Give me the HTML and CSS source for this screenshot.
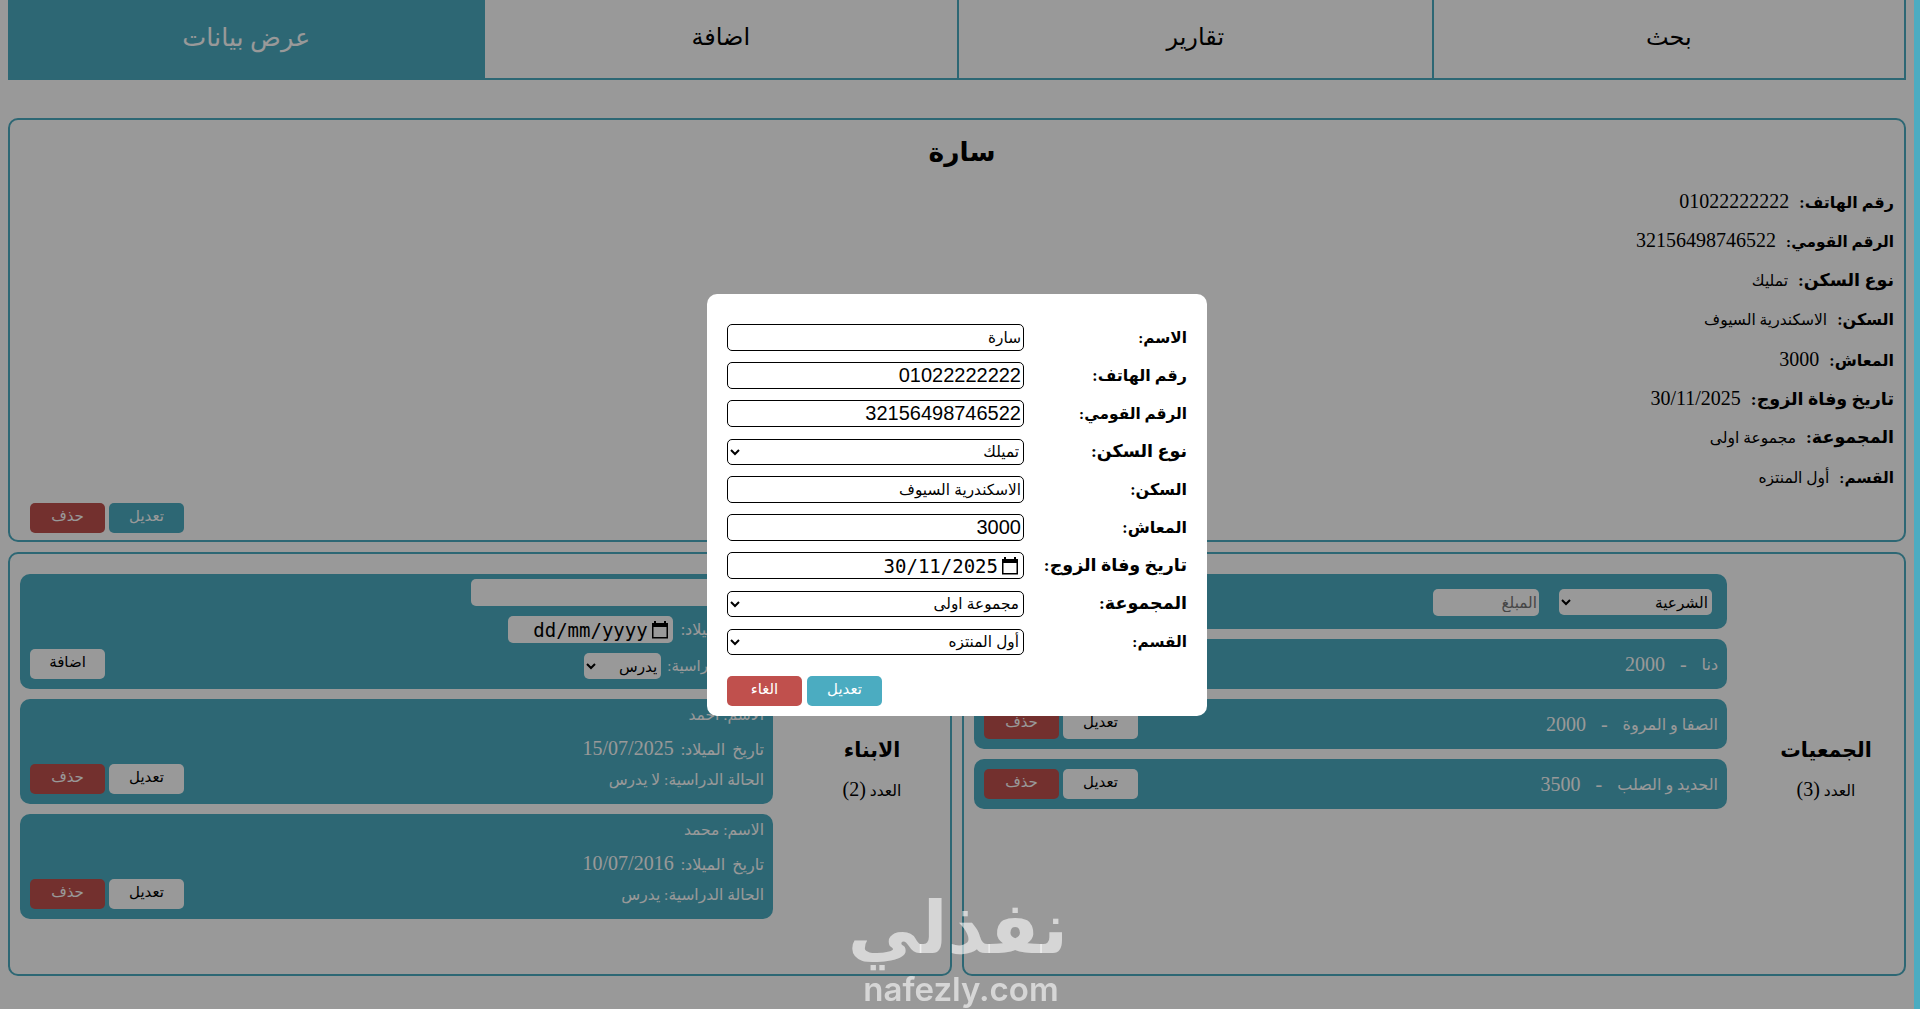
FILE: index.html
```html
<!DOCTYPE html>
<html lang="ar" dir="rtl">
  <head>
    <title>عرض بيانات</title>
    <meta charset="UTF-8" />
    <meta name="viewport" content="width=device-width, initial-scale=1.0" />
    <link rel="stylesheet" href="styles.css">
  </head>

  <body>
    <main class="page">
      <nav class="tabs">
        <a class="tab">بحث</a>
        <a class="tab">تقارير</a>
        <a class="tab">اضافة</a>
        <a class="tab active">عرض بيانات</a>
      </nav>

      <section class="card person">
        <h1>سارة</h1>
        <div class="info"><b class="small">رقم الهاتف:</b><span class="num">01022222222</span></div>
        <div class="info"><b class="smaller">الرقم القومي:</b><span class="num">32156498746522</span></div>
        <div class="info"><b>نوع السكن:</b><span>تمليك</span></div>
        <div class="info"><b class="small">السكن:</b><span>الاسكندرية السيوف</span></div>
        <div class="info"><b class="small">المعاش:</b><span class="num">3000</span></div>
        <div class="info"><b>تاريخ وفاة الزوج:</b><span class="num">30/11/2025</span></div>
        <div class="info"><b>المجموعة:</b><span>مجموعة اولى</span></div>
        <div class="info"><b class="smaller">القسم:</b><span>أول المنتزه</span></div>
        <div class="actions">
          <button class="btn btn-main">تعديل</button>
          <button class="btn btn-delete">حذف</button>
        </div>
      </section>

      <div class="panels">
        <section class="card panel">
          <div class="panel-title">
            <h2>الجمعيات</h2>
            <p>العدد <span class="num">(3)</span></p>
          </div>
          <div class="list">
            <form class="item charity-form">
              <select class="field">
                <option>الشرعية</option>
              </select>
              <input class="field" type="text" placeholder="المبلغ" />
            </form>
            <div class="item charity">
              <span>دنا</span><span class="num">-</span><span class="num">2000</span>
              <div class="actions">
                <button class="btn">تعديل</button>
                <button class="btn btn-delete">حذف</button>
              </div>
            </div>
            <div class="item charity">
              <span>الصفا و المروة</span><span class="num">-</span><span class="num">2000</span>
              <div class="actions">
                <button class="btn">تعديل</button>
                <button class="btn btn-delete">حذف</button>
              </div>
            </div>
            <div class="item charity">
              <span>الحديد و الصلب</span><span class="num">-</span><span class="num">3500</span>
              <div class="actions">
                <button class="btn">تعديل</button>
                <button class="btn btn-delete">حذف</button>
              </div>
            </div>
          </div>
        </section>

        <section class="card panel">
          <div class="panel-title">
            <h2>الابناء</h2>
            <p>العدد <span class="num">(2)</span></p>
          </div>
          <div class="list">
            <form class="item child-form">
              <div class="child-fields">
                <label>الاسم: <input class="field child-name" type="text" /></label>
                <label class="birth">تاريخ الميلاد:
                  <span class="field date-field child-date">
                    <svg class="calendar" viewBox="0 0 16 18"><path d="M2 0h2v2h8V0h2v2h2v15.500H0V2h2zM1.500 6v10h13V6z" fill-rule="evenodd" /></svg>
                    <span dir="ltr">dd/mm/yyyy</span>
                  </span>
                </label>
                <label class="study">الحالة الدراسية:
                  <select class="field child-study">
                    <option>يدرس</option>
                  </select>
                </label>
              </div>
              <button class="btn" type="button">اضافة</button>
            </form>
            <div class="item child">
              <div class="child-data">
                <p>الاسم: احمد</p>
                <p class="birth">تاريخ الميلاد: <span class="num">15/07/2025</span></p>
                <p>الحالة الدراسية: لا يدرس</p>
              </div>
              <div class="actions">
                <button class="btn">تعديل</button>
                <button class="btn btn-delete">حذف</button>
              </div>
            </div>
            <div class="item child">
              <div class="child-data">
                <p>الاسم: محمد</p>
                <p class="birth">تاريخ الميلاد: <span class="num">10/07/2016</span></p>
                <p>الحالة الدراسية: يدرس</p>
              </div>
              <div class="actions">
                <button class="btn">تعديل</button>
                <button class="btn btn-delete">حذف</button>
              </div>
            </div>
          </div>
        </section>
      </div>
    </main>

    <div class="overlay">
      <form class="modal">
        <label><b class="smaller">الاسم:</b><input class="field" type="text" value="سارة" /></label>
        <label><b class="small">رقم الهاتف:</b><input class="field num-field" type="text" value="01022222222" /></label>
        <label><b class="smaller">الرقم القومي:</b><input class="field num-field" type="text" value="32156498746522" /></label>
        <label><b>نوع السكن:</b>
          <select class="field"><option>تميلك</option></select>
        </label>
        <label><b class="small">السكن:</b><input class="field" type="text" value="الاسكندرية السيوف" /></label>
        <label><b class="small">المعاش:</b><input class="field num-field" type="text" value="3000" /></label>
        <label><b>تاريخ وفاة الزوج:</b>
          <span class="field date-field">
            <svg class="calendar" viewBox="0 0 16 18"><path d="M2 0h2v2h8V0h2v2h2v15.500H0V2h2zM1.500 6v10h13V6z" fill-rule="evenodd" /></svg>
            <span dir="ltr">30/11/2025</span>
          </span>
        </label>
        <label><b>المجموعة:</b>
          <select class="field"><option>مجموعة اولى</option></select>
        </label>
        <label><b class="smaller">القسم:</b>
          <select class="field"><option>أول المنتزه</option></select>
        </label>
        <div class="actions">
          <button class="btn btn-main" type="button">تعديل</button>
          <button class="btn btn-delete" type="button">الغاء</button>
        </div>
      </form>
    </div>

    <div class="watermark">
      <span class="mark-ar">نفذلي</span>
      <span class="mark-en">nafezly.com</span>
    </div>
    <div class="scrollbar"></div>
  </body>
</html>
```
FILE: styles.css
```css
* {
  box-sizing: border-box;
}

:root {
  --main: #4bacc1;
  --red: #c0504d;
}

body {
  margin: 0;
  height: 1009px;
  overflow: hidden;
  font-family: "Liberation Serif", "DejaVu Sans", serif;
  font-size: 15.5px;
  background-color: #fff;
}

h1, h2, p {
  margin: 0;
}

.page {
  margin-right: 6px;
  padding: 0 8px;
}

.num {
  font-size: 20px;
}

/* tabs */
.tabs {
  display: grid;
  grid-template-columns: repeat(4, 1fr);
  height: 80px;
  margin-bottom: 38px;
  border-bottom: 2px solid var(--main);
}

.tab {
  border-left: 2px solid var(--main);
  font-size: 24px;
  line-height: 75px;
  text-align: center;
}

.tab:first-child {
  border-right: 2px solid var(--main);
}

.tab.active {
  background-color: var(--main);
  color: #fff;
  font-size: 25.5px;
}

.card {
  border: 2px solid var(--main);
  border-radius: 10px;
}

/* buttons */
.actions {
  display: flex;
  gap: 4px;
}

.btn {
  width: 75px;
  height: 30px;
  padding: 0 0 4px;
  border: none;
  border-radius: 5px;
  background-color: #fff;
  color: #000;
  font-family: "Liberation Sans", "DejaVu Sans", sans-serif;
  font-size: 15px;
}

.btn-main {
  background-color: var(--main);
  color: #fff;
}

.btn-delete {
  background-color: var(--red);
  color: #fff;
}

/* person */
.person {
  display: flex;
  flex-direction: column;
  height: 424px;
  padding: 0 10px 7px 20px;
  margin-bottom: 10px;
}

.person h1 {
  height: 62px;
  line-height: 64px;
  font-size: 26.5px;
  text-align: center;
}

.info {
  display: flex;
  align-items: baseline;
  gap: 10px;
  height: 39.4px;
  line-height: 39px;
}

.info b,
.modal b {
  font-size: 17.5px;
}

.info b.small,
.modal b.small {
  font-size: 16px;
}

.info b.smaller,
.modal b.smaller {
  font-size: 15.3px;
}

.person .actions {
  margin-top: auto;
  justify-content: flex-end;
}

/* charities and children */
.panels {
  display: grid;
  grid-template-columns: 1fr 1fr;
  gap: 10px;
}

.panel {
  display: flex;
  gap: 31px;
  height: 424px;
  padding: 20px 10px;
}

.panel-title {
  flex: 1;
  align-self: center;
  padding-top: 12px;
  text-align: center;
}

.panel-title h2 {
  font-size: 20.5px;
  line-height: 40px;
}

.panel-title p {
  line-height: 38px;
}

.list {
  display: flex;
  flex-direction: column;
  gap: 10px;
  width: 753px;
}

.item {
  display: flex;
  border-radius: 10px;
  background-color: var(--main);
  color: #fff;
}

.item .actions {
  margin-right: auto;
}

.field {
  height: 27px;
  padding: 1px 2px;
  border: none;
  border-radius: 5px;
  background-color: #fff;
  color: #000;
  font-family: "Liberation Sans", "DejaVu Sans", sans-serif;
  font-size: 15.3px;
}

select.field {
  height: 26px;
  padding: 0;
}

.charity-form {
  height: 55px;
  padding: 15px;
  gap: 20px;
}

.charity-form select {
  width: 153px;
}

.charity-form input {
  width: 106px;
}

.charity {
  align-items: center;
  gap: 15px;
  height: 50px;
  padding: 0 9px 0 10px;
  font-size: 16px;
}

.child-form {
  align-items: flex-end;
  justify-content: space-between;
  height: 115px;
  padding: 5px 9px 10px 10px;
}

.child-fields {
  display: flex;
  flex-direction: column;
  gap: 10px;
  height: 100px;
}

.child-fields label {
  display: flex;
  align-items: center;
  gap: 6px;
  height: 27px;
}

.child-fields .study {
  font-size: 15px;
}

.child-name {
  width: 246px;
}

.child-date {
  width: 165px;
}

.child-study {
  width: 77px;
}

.child {
  align-items: flex-end;
  height: 105px;
  padding: 0 9px 10px 10px;
}

.child-data {
  align-self: flex-start;
}

.child-data p {
  height: 32.5px;
  line-height: 32px;
}

.birth {
  font-size: 16px;
  word-spacing: 3px;
}

.birth .child-date {
  margin-right: 2px;
}

.date-field {
  display: flex;
  align-items: center;
  gap: 4px;
  padding: 0 5px;
  font-family: "DejaVu Sans Mono", monospace;
  font-size: 19px;
}

.calendar {
  width: 16px;
  height: 18px;
}

/* edit window */
.overlay {
  position: fixed;
  top: 0;
  bottom: 0;
  left: 0;
  right: 6px;
  display: flex;
  align-items: center;
  justify-content: center;
  background-color: rgba(0, 0, 0, 0.4);
}

.modal {
  display: flex;
  flex-direction: column;
  width: 500px;
  height: 422px;
  padding: 25px 20px 10px;
  border-radius: 10px;
  background-color: #fff;
}

.modal label {
  display: flex;
  align-items: center;
  justify-content: space-between;
  height: 38px;
}

.modal .field {
  width: 297px;
  border: 1px solid #000;
}

.modal .num-field {
  font-size: 20px;
}

.modal .actions {
  gap: 5px;
  margin-top: auto;
  justify-content: flex-end;
}

.watermark {
  position: fixed;
  top: 883px;
  left: 854px;
  width: 214px;
  height: 126px;
  text-align: center;
  color: rgba(255, 255, 255, 0.6);
}

.watermark span {
  display: block;
}

.mark-ar {
  font: bold 72px/90px "DejaVu Sans", sans-serif;
}

.mark-en {
  font: 600 33px/32px Inter, sans-serif;
}

.scrollbar {
  position: fixed;
  top: 0;
  right: 0;
  width: 6px;
  height: 100%;
  background-color: var(--main);
}
```
